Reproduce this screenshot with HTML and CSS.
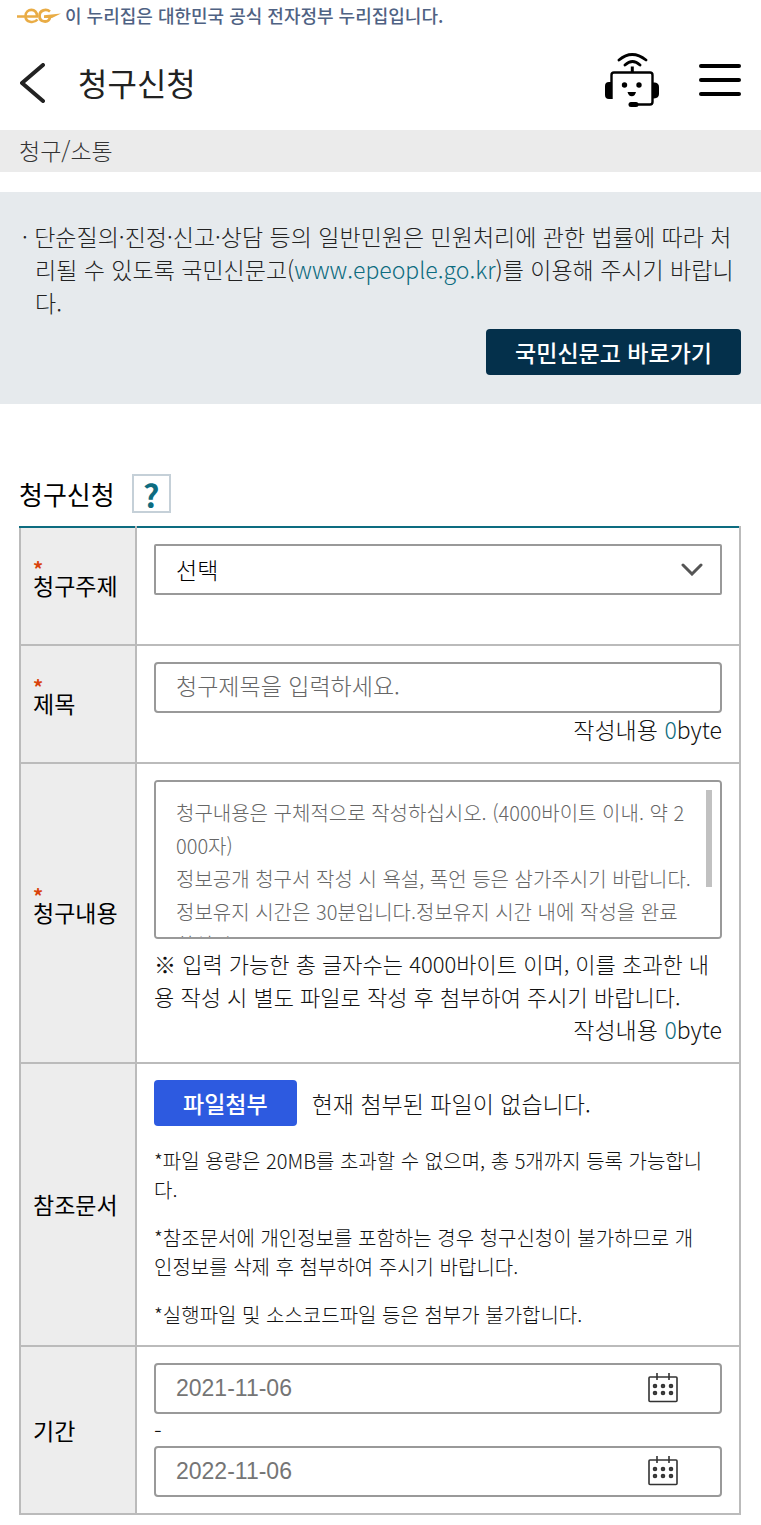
FILE: index.html
```html
<!DOCTYPE html>
<html lang="ko">
<head>
    <meta charset="UTF-8">
    <meta name="viewport" content="width=device-width, initial-scale=1">
    <title>청구신청</title>
    <link rel="stylesheet" href="styles.css">
</head>
<body>
<div id="gov">
    <svg class="gov-logo" width="44" height="16" viewBox="0 0 44 16" fill="none" stroke="#e9ac45" stroke-width="2.8">
        <path d="M0 8.500H20C20.500 -.5 8.500 0 8.500 8C8.500 14.800 17 15.500 20.500 11.500" stroke-width="2.600"/>
        <path d="M33 3.500C29 .5 22.500 2 22.500 8C22.500 14.500 31.500 15.500 33 9.500"/>
        <path d="M27 7.300L44 5.500L35 10H27Z" fill="#e9ac45" stroke="none"/>
    </svg>
    <span>이 누리집은 대한민국 공식 전자정부 누리집입니다.</span>
</div>
<header id="header">
    <a href="#" class="back" aria-label="이전">
        <svg width="26" height="40" viewBox="0 0 26 40" fill="none" stroke="#222" stroke-width="4" stroke-linecap="round" stroke-linejoin="round">
            <path d="M23 2L2 20L23 38"/>
        </svg>
    </a>
    <h1>청구신청</h1>
    <a href="#" class="chatbot" aria-label="챗봇">
        <svg width="54" height="54" viewBox="0 0 54 54" fill="none" stroke="#000" stroke-width="2.4">
            <path d="M14 7Q27 -4 41 7M20 12Q27.500 5 35 12" stroke-width="2.8" stroke-linecap="round"/>
            <path d="M27.300 13.500V19" stroke-width="3"/>
            <path d="M6.500 46V22Q6.500 19.500 9 19.500H45Q47.500 19.500 47.500 22V49Q47.500 51.500 45 51.500H32"/>
            <path d="M7 29H4Q0 29 0 33V42Q0 46 4 46H7ZM48 29.500H50Q54 30 54 34V41Q54 45 49 45.500H48Z" fill="#000" stroke="none"/>
            <circle cx="19.500" cy="32" r="2.700" fill="#000" stroke="none"/>
            <circle cx="34" cy="32" r="2.700" fill="#000" stroke="none"/>
            <path d="M22.500 39H31Q30 43.200 26.800 43.200Q23.500 43.200 22.500 39Z" fill="#000" stroke="none"/>
            <rect x="23.500" y="49" width="10" height="5" rx="2.500" fill="#000" stroke="none"/>
        </svg>
    </a>
    <button type="button" class="menu" aria-label="전체메뉴"><i></i><i></i><i></i></button>
</header>
<nav id="location">청구/소통</nav>

<section id="notice">
    <p>· 단순질의·진정·신고·상담 등의 일반민원은 민원처리에 관한 법률에 따라 처리될 수 있도록 국민신문고(<a href="#">www.epeople.go.kr</a>)를 이용해 주시기 바랍니다.</p>
    <button type="button" class="btn btn-navy">국민신문고 바로가기</button>
</section>

<form id="content" action="#">
    <div class="title">
        <h2>청구신청</h2>
        <button type="button" class="help" aria-label="도움말">?</button>
    </div>
    <table>
        <tr class="row-subject">
            <th scope="row"><span class="need">*</span><label for="subject">청구주제</label></th>
            <td>
                <div class="field">
                    <select id="subject"><option>선택</option></select>
                    <svg class="arrow" width="22" height="13" viewBox="0 0 22 13" fill="none" stroke="#555" stroke-width="3" stroke-linecap="round">
                        <path d="M2 2L11 11L20 2"/>
                    </svg>
                </div>
            </td>
        </tr>
        <tr class="row-name">
            <th scope="row"><span class="need">*</span><label for="name">제목</label></th>
            <td>
                <input type="text" id="name" placeholder="청구제목을 입력하세요.">
                <p class="count">작성내용 <em>0</em>byte</p>
            </td>
        </tr>
        <tr>
            <th scope="row"><span class="need">*</span><label for="detail">청구내용</label></th>
            <td>
                <div class="field">
                    <textarea id="detail" placeholder="청구내용은 구체적으로 작성하십시오. (4000바이트 이내. 약 2000자)&#10;정보공개 청구서 작성 시 욕설, 폭언 등은 삼가주시기 바랍니다.&#10;정보유지 시간은 30분입니다.정보유지 시간 내에 작성을 완료하십시오."></textarea>
                    <i class="bar"></i>
                </div>
                <p class="info">※ 입력 가능한 총 글자수는 4000바이트 이며, 이를 초과한 내용 작성 시 별도 파일로 작성 후 첨부하여 주시기 바랍니다.</p>
                <p class="count">작성내용 <em>0</em>byte</p>
            </td>
        </tr>
        <tr>
            <th scope="row">참조문서</th>
            <td>
                <div class="attach">
                    <button type="button" class="btn btn-blue">파일첨부</button>
                    <span>현재 첨부된 파일이 없습니다.</span>
                </div>
                <ul class="guide">
                    <li>*파일 용량은 20MB를 초과할 수 없으며, 총 5개까지 등록 가능합니다.</li>
                    <li>*참조문서에 개인정보를 포함하는 경우 청구신청이 불가하므로 개인정보를 삭제 후 첨부하여 주시기 바랍니다.</li>
                    <li>*실행파일 및 소스코드파일 등은 첨부가 불가합니다.</li>
                </ul>
            </td>
        </tr>
        <tr>
            <th scope="row"><label for="from">기간</label></th>
            <td>
                <div class="field">
                    <input type="text" id="from" class="date" value="2021-11-06">
                    <button type="button" class="cal" aria-label="시작일 선택">
                        <svg width="30" height="30" viewBox="0 0 30 30" fill="none" stroke="#333" stroke-width="1.6">
                            <rect x="1" y="4" width="28" height="24.500" rx="1"/>
                            <path d="M9 0V7M21 0V7"/>
                            <g stroke-width="2">
                                <circle cx="7" cy="13" r="1.300"/><circle cx="15" cy="13" r="1.300"/><circle cx="23" cy="13" r="1.300"/>
                                <circle cx="7" cy="20" r="1.300"/><circle cx="15" cy="20" r="1.300"/><circle cx="23" cy="20" r="1.300"/>
                            </g>
                        </svg>
                    </button>
                </div>
                <p class="dash">-</p>
                <div class="field">
                    <input type="text" class="date" value="2022-11-06" aria-label="종료일">
                    <button type="button" class="cal" aria-label="종료일 선택">
                        <svg width="30" height="30" viewBox="0 0 30 30" fill="none" stroke="#333" stroke-width="1.6">
                            <rect x="1" y="4" width="28" height="24.500" rx="1"/>
                            <path d="M9 0V7M21 0V7"/>
                            <g stroke-width="2">
                                <circle cx="7" cy="13" r="1.300"/><circle cx="15" cy="13" r="1.300"/><circle cx="23" cy="13" r="1.300"/>
                                <circle cx="7" cy="20" r="1.300"/><circle cx="15" cy="20" r="1.300"/><circle cx="23" cy="20" r="1.300"/>
                            </g>
                        </svg>
                    </button>
                </div>
            </td>
        </tr>
    </table>
</form>
</body>
</html>
```
FILE: styles.css
```css
*{
    margin: 0;
    padding: 0;
    box-sizing: border-box;
}
body{
    background: #fff;
    color: #111;
    font: 300 23px/33px "Noto Sans CJK KR", sans-serif;
}
ul{
    list-style: none;
}
a{
    color: #0d6c80;
    text-decoration: none;
}
em{
    color: #0d6c80;
    font-style: normal;
}
svg{
    display: block;
}
button,input,select,textarea{
    font: inherit;
}
button{
    border: 0;
    background: none;
    cursor: pointer;
}
#gov{
    display: flex;
    align-items: center;
    height: 30px;
    padding: 0 17px;
    color: #4f6283;
    font-size: 18px;
    font-weight: 500;
    line-height: 28px;
}
.gov-logo{
    margin: 2px 4px 0 0;
}
#header{
    display: flex;
    align-items: center;
    height: 100px;
    padding: 0 20px;
}
.back{
    margin-top: 6px;
}
#header h1{
    flex: 1;
    margin: 4px 0 0 32px;
    color: #222;
    font-size: 32px;
    font-weight: 400;
}
.menu{
    display: flex;
    flex-direction: column;
    gap: 10px;
    margin-left: 40px;
}
.menu i{
    width: 42px;
    height: 4px;
    border-radius: 2px;
    background: #000;
}
#location{
    height: 42px;
    padding: 0 19px;
    background: #ebebeb;
    color: #333;
    line-height: 40px;
}
#notice{
    margin-top: 20px;
    padding: 28px 20px 29px;
    background: #e6eaed;
    color: #222;
    text-align: right;
}
#notice p{
    margin-bottom: 10px;
    padding-left: 15px;
    text-align: left;
    text-indent: -13px;
}
.btn{
    height: 46px;
    padding: 0 29px;
    border-radius: 4px;
    color: #fff;
    font-weight: 500;
    line-height: 46px;
    vertical-align: top;
}
.btn-navy{
    background: #04304b;
}
.btn-blue{
    background: #2d5ae0;
}
#content{
    padding: 70px 20px 10px 19px;
}
.title{
    display: flex;
    align-items: center;
    gap: 17px;
    margin-bottom: 13px;
}
.title h2{
    color: #000;
    font-size: 26px;
    font-weight: 400;
}
.help{
    width: 39px;
    height: 39px;
    border: 2px solid #c5d0d8;
    color: #0d6c80;
    font-size: 32px;
    font-weight: 700;
    line-height: 32px;
}
table{
    width: 100%;
    border-collapse: collapse;
    border-top: 2px solid #0d6c80;
}
th,td{
    border: 2px solid #bbb;
    text-align: left;
}
tr:first-child th,tr:first-child td{
    border-top-color: #0d6c80;
}
th{
    width: 116px;
    padding: 0 12px;
    background: #ededed;
    color: #000;
    font-weight: 400;
}
td{
    padding: 16px 17px;
}
.row-subject,.row-name{
    height: 118px;
}
.row-subject td,.row-name td{
    vertical-align: top;
}
.need{
    display: block;
    height: 8px;
    color: #d9420b;
    font-size: 20px;
    font-weight: 700;
    line-height: 16px;
}
th label{
    display: block;
}
.need + label{
    padding-bottom: 10px;
}
.field{
    position: relative;
}
input,select,textarea{
    display: block;
    width: 100%;
    height: 51px;
    padding: 0 20px;
    border: 2px solid #999;
    border-radius: 4px;
    background: #fff;
    color: #000;
    outline: none;
}
#name{
    padding-bottom: 5px;
}
select{
    border-radius: 2px;
    appearance: none;
}
.arrow{
    position: absolute;
    right: 19px;
    top: 19px;
    pointer-events: none;
}
::placeholder{
    color: #666;
    opacity: 1;
}
textarea{
    height: 159px;
    padding: 14px 28px 0 20px;
    font-size: 20px;
    word-break: break-all;
    resize: none;
}
.bar{
    position: absolute;
    right: 10px;
    top: 10px;
    width: 6px;
    height: 97px;
    background: #c1c1c1;
}
.info{
    margin-top: 8px;
    font-size: 22px;
}
.count{
    text-align: right;
}
.attach{
    display: flex;
    align-items: center;
    gap: 15px;
}
.guide{
    margin-top: 20px;
    padding-right: 14px;
    font-size: 20px;
    line-height: 29px;
}
.guide li{
    margin-bottom: 19px;
}
.guide li:last-child{
    margin-bottom: 0;
}
.date{
    color: #757575;
    font-family: "Liberation Sans", sans-serif;
}
.cal{
    position: absolute;
    right: 44px;
    top: 10px;
}
.dash{
    height: 32px;
}
```
